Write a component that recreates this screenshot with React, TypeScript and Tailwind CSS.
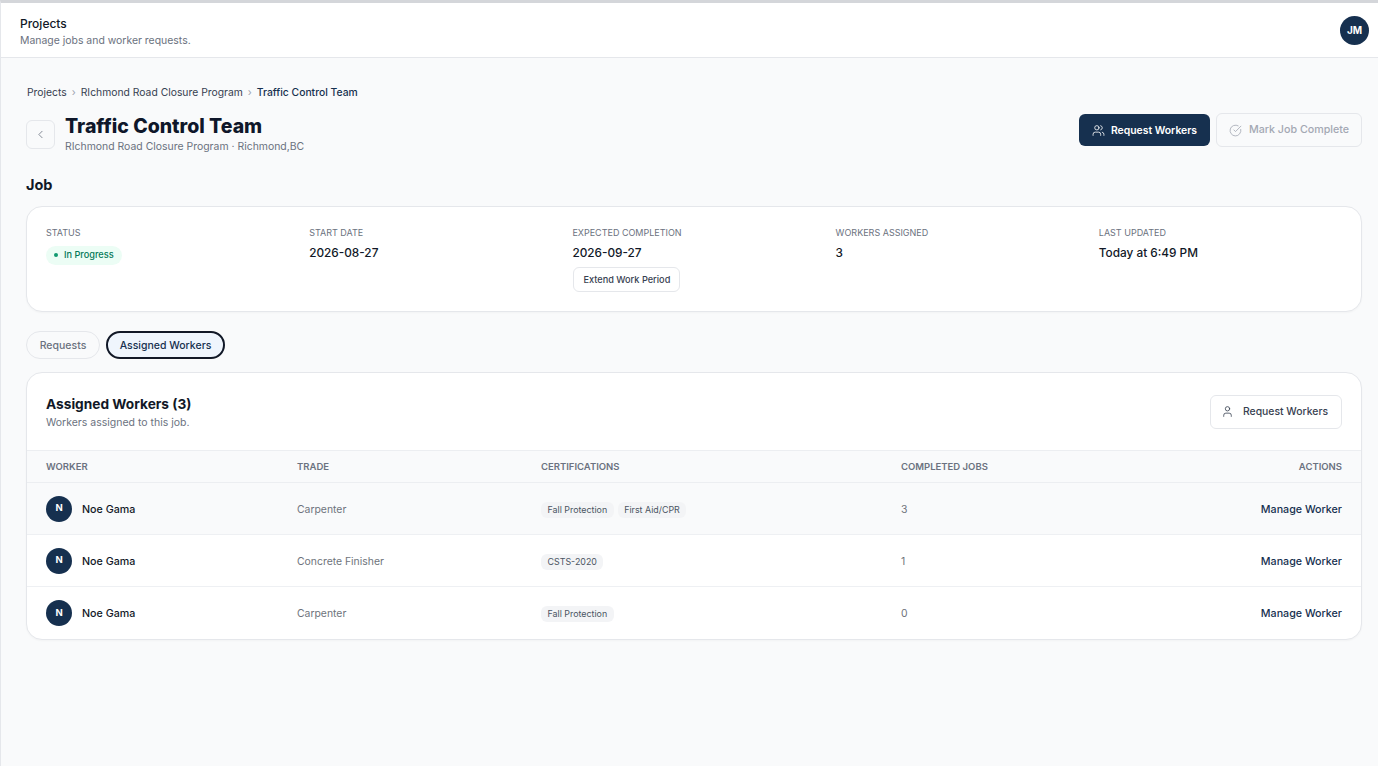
import { ChevronLeft, CircleCheckBig, User, Users } from "lucide-react";

const navy = "bg-[#16304f]";

const summary = [
  { label: "START DATE", value: "2026-08-27" },
  { label: "EXPECTED COMPLETION", value: "2026-09-27", extend: true },
  { label: "WORKERS ASSIGNED", value: "3" },
  { label: "LAST UPDATED", value: "Today at 6:49 PM" },
];

const workers = [
  { name: "Noe Gama", trade: "Carpenter", certs: ["Fall Protection", "First Aid/CPR"], jobs: 3, hover: true },
  { name: "Noe Gama", trade: "Concrete Finisher", certs: ["CSTS-2020"], jobs: 1, hover: false },
  { name: "Noe Gama", trade: "Carpenter", certs: ["Fall Protection"], jobs: 0, hover: false },
];

const WorkerRow = ({ worker, last }: { worker: (typeof workers)[number]; last: boolean }) => (
  <div
    className={`grid h-[52px] grid-cols-[251px_244px_360px_1fr] items-center px-[19px] ${last ? "" : "border-b border-[#eef0f3]"} ${worker.hover ? "bg-[#f9fafb]" : ""}`}
  >
    <div className="flex items-center gap-[10px]">
      <div className={`flex h-[26px] w-[26px] items-center justify-center rounded-full ${navy} text-[9.5px] font-bold text-white`}>
        N
      </div>
      <span className="pt-[3px] text-[10.7px] font-medium text-[#111827]">{worker.name}</span>
    </div>
    <span className="pt-[2px] text-[10.4px] text-[#6e737b]">{worker.trade}</span>
    <div className="flex gap-[4px] pt-[2px]">
      {worker.certs.map((cert) => (
        <span key={cert} className="rounded-md bg-[#f3f4f6] px-[6.5px] py-[1px] text-[8.9px] leading-[14px] text-[#4b5563]">
          {cert}
        </span>
      ))}
    </div>
    <div className="flex items-center justify-between">
      <span className="pt-[2px] text-[10.4px] text-[#6e737b]">{worker.jobs}</span>
      <span className="pt-[3px] text-[10.7px] font-medium text-[#16304f]">Manage Worker</span>
    </div>
  </div>
);

export default function App() {
  return (
    <div className="min-h-[766px] border-t-[3px] border-l border-t-[#d4d6da] border-l-[#e5e7eb] bg-[#f9fafb] font-['Inter',sans-serif]">
      <header className="flex h-[55px] items-center justify-between border-b border-[#e5e7eb] bg-white pr-[9px] pl-[19px]">
        <div className="mt-[2px]">
          <h1 className="text-[12px] leading-[18px] font-medium text-[#111827]">Projects</h1>
          <p className="text-[10.45px] leading-[15px] text-[#6b7280]">Manage jobs and worker requests.</p>
        </div>
        <div className={`flex h-[29px] w-[29px] items-center justify-center rounded-full ${navy} text-[10px] font-bold text-white`}>
          JM
        </div>
      </header>

      <main className="pt-[27px] pr-[16px] pl-[25px]">
        <nav className="flex items-center gap-[5px] pl-px text-[10.35px] leading-[15px] text-[#374151]">
          <span>Projects</span>
          <span className="text-[#9ca3af]">›</span>
          <span>RIchmond Road Closure Program</span>
          <span className="text-[#9ca3af]">›</span>
          <span className="font-medium text-[#16304f]">Traffic Control Team</span>
        </nav>

        <div className="mt-[13px] flex items-start justify-between">
          <div className="flex items-center gap-[10px] pt-px">
            <button className="flex h-[29px] w-[29px] items-center justify-center rounded-md border border-[#e5e7eb] bg-[#f9fafb] text-[#6b7280]">
              <ChevronLeft size={13} strokeWidth={1.5} />
            </button>
            <div>
              <h2 className="text-[19.5px] leading-[24px] font-extrabold text-[#0f172a]">Traffic Control Team</h2>
              <p className="pt-px text-[10.45px] leading-[16px] text-[#6b7280]">RIchmond Road Closure Program · Richmond,BC</p>
            </div>
          </div>
          <div className="flex items-center gap-[6px]">
            <button className={`flex h-[32px] w-[131px] items-center justify-center gap-[6px] rounded-md pt-px ${navy} text-[10.4px] font-semibold text-white`}>
              <Users size={13} strokeWidth={1.5} />
              Request Workers
            </button>
            <button className="flex h-[34px] w-[146px] items-center justify-center gap-[7px] rounded-md border border-[#e5e7eb] bg-[#f9fafb] pt-px text-[10.7px] font-medium text-[#a3a8b3]">
              <CircleCheckBig size={13} strokeWidth={1.5} />
              Mark Job Complete
            </button>
          </div>
        </div>

        <h3 className="mt-[20px] text-[14.5px] leading-[20px] font-bold text-[#111827]">Job</h3>

        <section className="mt-[11px] grid h-[106px] grid-cols-5 gap-5 rounded-2xl border border-[#e5e7eb] bg-white px-[19px] pt-[19px] shadow-[0_1px_2px_rgba(0,0,0,0.03)]">
          <div>
            <div className="text-[9px] leading-[13px] text-[#6b7280]">STATUS</div>
            <span className="mt-[6px] inline-flex h-[19px] items-center gap-[6px] rounded-full bg-[#ecfdf5] px-[8px] text-[9.2px] font-medium text-[#047857]">
              <span className="h-[4px] w-[4px] rounded-full bg-[#10996f]" />
              In Progress
            </span>
          </div>
          {summary.map((item) => (
            <div key={item.label}>
              <div className="text-[9px] leading-[13px] text-[#6b7280]">{item.label}</div>
              <div className="mt-[5px] text-[11.8px] leading-[18px] font-medium text-[#111827]">{item.value}</div>
              {item.extend && (
                <button className="mt-[5px] ml-px h-[25px] rounded-md border border-[#e5e7eb] bg-white px-[9px] text-[9.2px] font-medium text-[#374151]">
                  Extend Work Period
                </button>
              )}
            </div>
          ))}
        </section>

        <div className="mt-[19px] flex items-center gap-[6px]">
          <button className="h-[28px] w-[74px] rounded-full border border-[#e5e7eb] bg-[#f9fafb] pt-px text-[10.5px] font-medium text-[#6b7280]">
            Requests
          </button>
          <button className="h-[28px] w-[119px] rounded-full border-2 border-[#111827] bg-[#eff5fd] pt-px text-[10.5px] font-medium text-[#16304f]">
            Assigned Workers
          </button>
        </div>

        <section className="mt-[13px] overflow-hidden rounded-2xl border border-[#e5e7eb] bg-white shadow-[0_1px_2px_rgba(0,0,0,0.03)]">
          <div className="flex h-[77px] items-center justify-between px-[19px]">
            <div className="mt-[2px]">
              <h3 className="text-[13.7px] leading-[20px] font-bold text-[#111827]">Assigned Workers (3)</h3>
              <p className="pt-px text-[10.5px] leading-[16px] text-[#6b7280]">Workers assigned to this job.</p>
            </div>
            <button className="flex h-[34px] w-[132px] items-center justify-center gap-[9px] rounded-md border border-[#e5e7eb] bg-white pr-[3px] text-[10.4px] font-medium text-[#374151]">
              <User size={13} strokeWidth={1.5} />
              Request Workers
            </button>
          </div>
          <div className="grid h-[33px] grid-cols-[251px_244px_360px_1fr] items-center border-y border-[#eceef1] bg-[#f9fafb] px-[19px] pt-[2px] text-[9.5px] font-semibold text-[#6b7280]">
            <span>WORKER</span>
            <span>TRADE</span>
            <span>CERTIFICATIONS</span>
            <div className="flex justify-between">
              <span>COMPLETED JOBS</span>
              <span>ACTIONS</span>
            </div>
          </div>
          {workers.map((worker, i) => (
            <WorkerRow key={i} worker={worker} last={i === workers.length - 1} />
          ))}
        </section>
      </main>
    </div>
  );
}
